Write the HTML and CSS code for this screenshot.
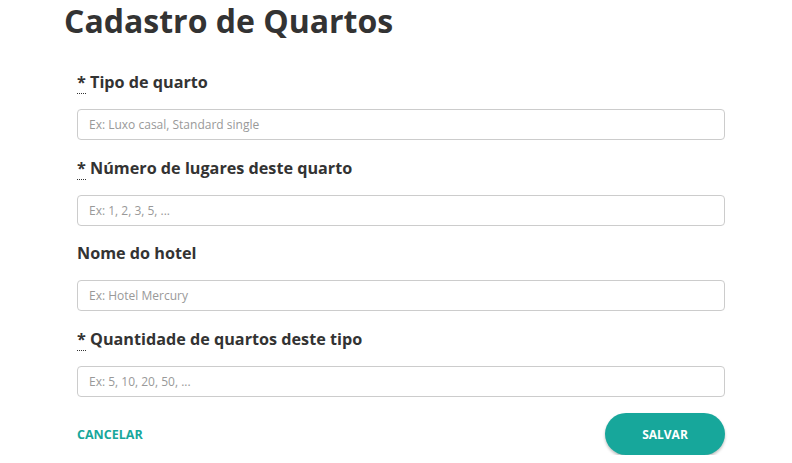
FILE: index.html
```html
<!DOCTYPE html>
<html lang="pt-BR">
<head>
    <meta charset="UTF-8">
    <meta name="viewport" content="width=device-width, initial-scale=1.0">
    <title>Cadastro de Quartos</title>
    <link rel="stylesheet" href="styles.css">
</head>
<body>
    <div class="page">
        <h1 class="title">Cadastro de Quartos</h1>

        <form class="form">
            <div class="field">
                <label class="label" for="tipo"><abbr title="obrigatório">*</abbr> Tipo de quarto</label>
                <input class="input" id="tipo" type="text" placeholder="Ex: Luxo casal, Standard single">
            </div>
            <div class="field">
                <label class="label" for="lugares"><abbr title="obrigatório">*</abbr> Número de lugares deste quarto</label>
                <input class="input" id="lugares" type="text" placeholder="Ex: 1, 2, 3, 5, ...">
            </div>
            <div class="field">
                <label class="label" for="hotel">Nome do hotel</label>
                <input class="input" id="hotel" type="text" placeholder="Ex: Hotel Mercury">
            </div>
            <div class="field">
                <label class="label" for="quantidade"><abbr title="obrigatório">*</abbr> Quantidade de quartos deste tipo</label>
                <input class="input" id="quantidade" type="text" placeholder="Ex: 5, 10, 20, 50, ...">
            </div>

            <div class="actions">
                <a class="cancel-btn" href="#">CANCELAR</a>
                <button class="save-btn" type="submit">SALVAR</button>
            </div>
        </form>
    </div>
</body>
</html>
```

FILE: styles.css
```css
* {
    margin: 0;
    padding: 0;
    box-sizing: border-box;
}

body {
    font-family: 'Open Sans', sans-serif;
    color: #333;
    background: #fff;
}

.page {
    padding-left: 64px;
}

.title {
    font-size: 32px;
    line-height: 41px;
    font-weight: 700;
    color: #333;
}

.form {
    width: 648px;
    margin-left: 13px;
    margin-top: 30px;
}

.field {
    display: flex;
    flex-direction: column;
    gap: 16px;
    margin-bottom: 16.5px;
}

.label {
    font-size: 16.2px;
    font-weight: 700;
    color: #333;
}

.label abbr {
    text-decoration: none;
    border-bottom: 1px dotted #333;
}

.input {
    height: 31px;
    padding: 0 11px;
    border: 1px solid #ccc;
    border-radius: 4px;
    font-family: 'Open Sans', sans-serif;
    font-size: 12px;
    color: #333;
}

.input::placeholder {
    color: #999;
}

.actions {
    display: flex;
    justify-content: space-between;
    align-items: center;
    margin-top: 3px;
}

.cancel-btn {
    font-size: 12.5px;
    font-weight: 700;
    color: #17a79b;
    text-decoration: none;
}

.save-btn {
    width: 120px;
    height: 42px;
    border: none;
    border-radius: 21px;
    background: #17a79b;
    color: white;
    font-family: 'Open Sans', sans-serif;
    font-size: 12px;
    font-weight: 700;
    box-shadow: 0 2px 3px rgba(0, 0, 0, 0.25);
    cursor: pointer;
}
```
